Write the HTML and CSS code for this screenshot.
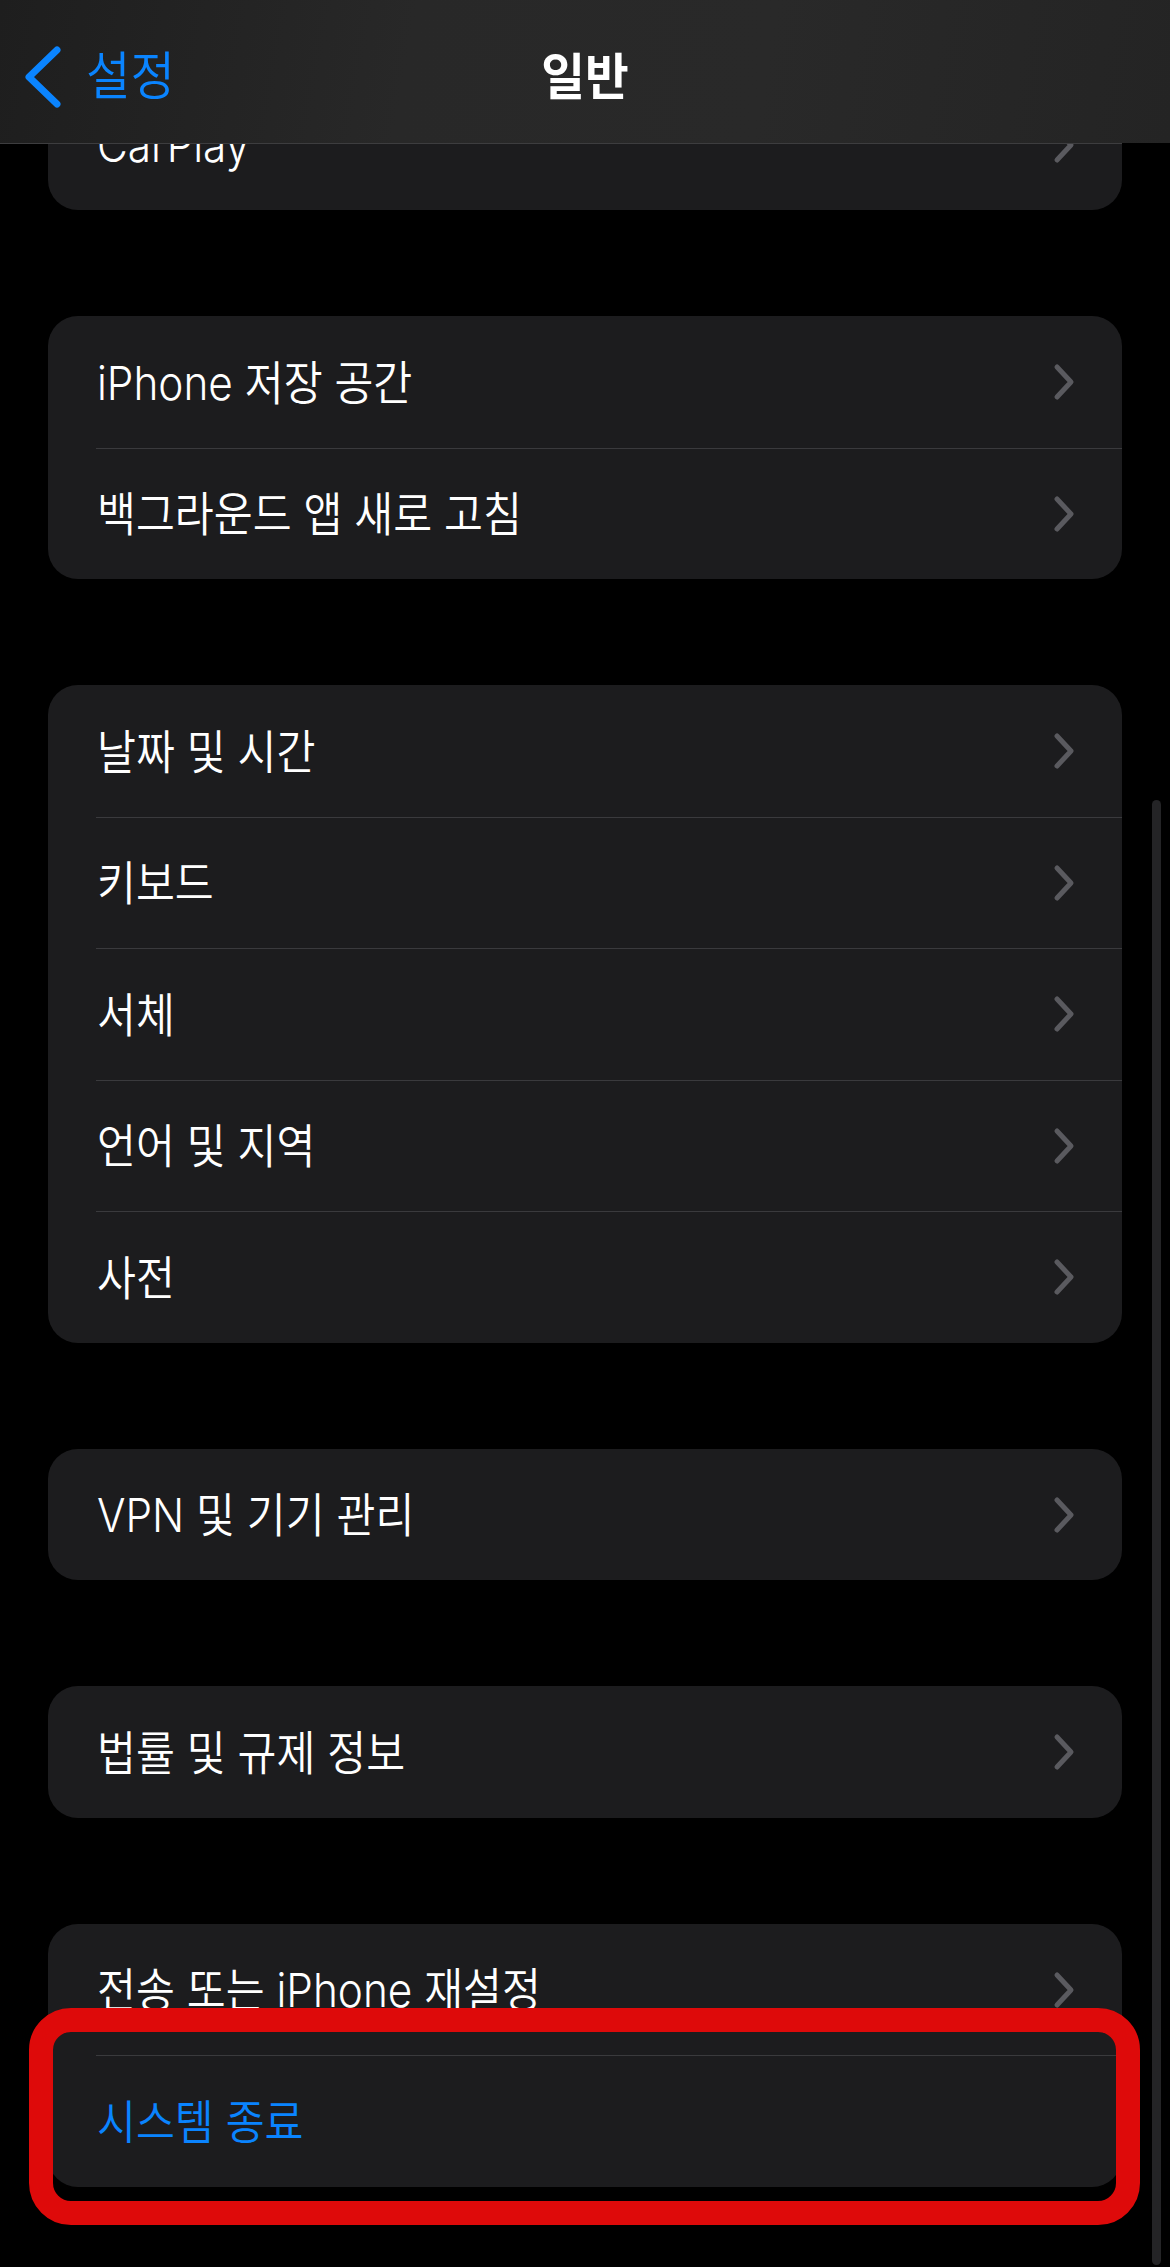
FILE: index.html
```html
<!DOCTYPE html>
<html lang="ko">
<head>
<meta charset="utf-8">
<title>일반</title>
<link rel="stylesheet" href="styles.css">
</head>
<body>
<main class="content">
  <section class="card">
    <div class="row"><div class="row-body"><span class="label">CarPlay</span><svg class="chev" viewBox="0 0 24 40" width="24" height="40"><polyline points="5,5 19,20 5,35"/></svg></div></div>
  </section>
  <section class="card">
    <div class="row"><div class="row-body"><span class="label">iPhone 저장 공간</span><svg class="chev" viewBox="0 0 24 40" width="24" height="40"><polyline points="5,5 19,20 5,35"/></svg></div></div>
    <div class="row"><div class="row-body"><span class="label">백그라운드 앱 새로 고침</span><svg class="chev" viewBox="0 0 24 40" width="24" height="40"><polyline points="5,5 19,20 5,35"/></svg></div></div>
  </section>
  <section class="card">
    <div class="row"><div class="row-body"><span class="label">날짜 및 시간</span><svg class="chev" viewBox="0 0 24 40" width="24" height="40"><polyline points="5,5 19,20 5,35"/></svg></div></div>
    <div class="row"><div class="row-body"><span class="label">키보드</span><svg class="chev" viewBox="0 0 24 40" width="24" height="40"><polyline points="5,5 19,20 5,35"/></svg></div></div>
    <div class="row"><div class="row-body"><span class="label">서체</span><svg class="chev" viewBox="0 0 24 40" width="24" height="40"><polyline points="5,5 19,20 5,35"/></svg></div></div>
    <div class="row"><div class="row-body"><span class="label">언어 및 지역</span><svg class="chev" viewBox="0 0 24 40" width="24" height="40"><polyline points="5,5 19,20 5,35"/></svg></div></div>
    <div class="row"><div class="row-body"><span class="label">사전</span><svg class="chev" viewBox="0 0 24 40" width="24" height="40"><polyline points="5,5 19,20 5,35"/></svg></div></div>
  </section>
  <section class="card">
    <div class="row"><div class="row-body"><span class="label">VPN 및 기기 관리</span><svg class="chev" viewBox="0 0 24 40" width="24" height="40"><polyline points="5,5 19,20 5,35"/></svg></div></div>
  </section>
  <section class="card">
    <div class="row"><div class="row-body"><span class="label">법률 및 규제 정보</span><svg class="chev" viewBox="0 0 24 40" width="24" height="40"><polyline points="5,5 19,20 5,35"/></svg></div></div>
  </section>
  <section class="card">
    <div class="row"><div class="row-body"><span class="label">전송 또는 iPhone 재설정</span><svg class="chev" viewBox="0 0 24 40" width="24" height="40"><polyline points="5,5 19,20 5,35"/></svg></div></div>
    <div class="row"><div class="row-body"><span class="label label-blue">시스템 종료</span></div></div>
  </section>
</main>

<header class="navbar">
  <div class="back">
    <svg class="back-chev" viewBox="0 0 44 64" width="44" height="64"><polyline points="35,5 7,32 35,59"/></svg>
    <span class="back-text">설정</span>
  </div>
  <h1 class="title">일반</h1>
  <div class="spacer"></div>
</header>

<div class="scrollbar"></div>
<div class="highlight"></div>
</body>
</html>
```

FILE: styles.css
```css
html, body {
  margin: 0;
  padding: 0;
  background: #000;
}

body {
  width: 1170px;
  height: 2267px;
  overflow: hidden;
  position: relative;
  font-family: Inter, "Noto Sans CJK KR", sans-serif;
  color: #fff;
}

.content {
  padding: 78.5px 48px 0;
  display: flex;
  flex-direction: column;
  gap: 106px;
}

.card {
  background: #1c1c1e;
  border-radius: 30px;
  overflow: hidden;
  display: flex;
  flex-direction: column;
}

.row {
  height: 131.5px;
  padding-left: 48px;
  display: flex;
}

.row-body {
  flex: 1;
  display: flex;
  align-items: center;
  justify-content: space-between;
  padding: 0 46px 0 1px;
  border-top: 1px solid #3a3a3d;
  box-sizing: border-box;
}

.row:first-child .row-body {
  border-top-color: transparent;
}

.label {
  font-size: 47px;
  line-height: 1;
  font-weight: 350;
  transform: scaleX(0.9);
  transform-origin: left center;
  white-space: nowrap;
}

.label-blue {
  color: #0a84ff;
}

.chev {
  flex: none;
  fill: none;
  stroke: #5a5a5f;
  stroke-width: 5;
  stroke-linecap: round;
  stroke-linejoin: round;
}

.navbar {
  position: absolute;
  top: 0;
  left: 0;
  width: 1170px;
  height: 143px;
  box-sizing: border-box;
  padding-top: 10px;
  display: grid;
  grid-template-columns: 1fr auto 1fr;
  align-items: center;
  background: linear-gradient(100deg, #1e1e1e 0%, #282828 35%, #292929 65%, #242424 100%);
}

.navbar::after {
  content: "";
  position: absolute;
  left: 0;
  bottom: -1px;
  width: 1122px;
  height: 1px;
  background: #3d3d3f;
}

.back {
  display: flex;
  align-items: center;
  padding-left: 22px;
}

.back-chev {
  fill: none;
  stroke: #0a84ff;
  stroke-width: 7;
  stroke-linecap: round;
  stroke-linejoin: round;
}

.back-text {
  margin-left: 20px;
  font-size: 52px;
  line-height: 1;
  font-weight: 350;
  color: #0a84ff;
  transform: scaleX(0.93);
  transform-origin: left center;
}

.title {
  margin: 0;
  font-size: 50px;
  line-height: 1;
  font-weight: 700;
  color: #fff;
  transform: scaleX(0.95);
}

.scrollbar {
  position: absolute;
  left: 1152px;
  top: 800px;
  width: 9px;
  height: 1465px;
  border-radius: 5px;
  background: #242426;
}

.highlight {
  position: absolute;
  left: 29px;
  top: 2008px;
  width: 1111px;
  height: 217px;
  box-sizing: border-box;
  border: 24px solid #de0a0a;
  border-radius: 42px;
}
```
